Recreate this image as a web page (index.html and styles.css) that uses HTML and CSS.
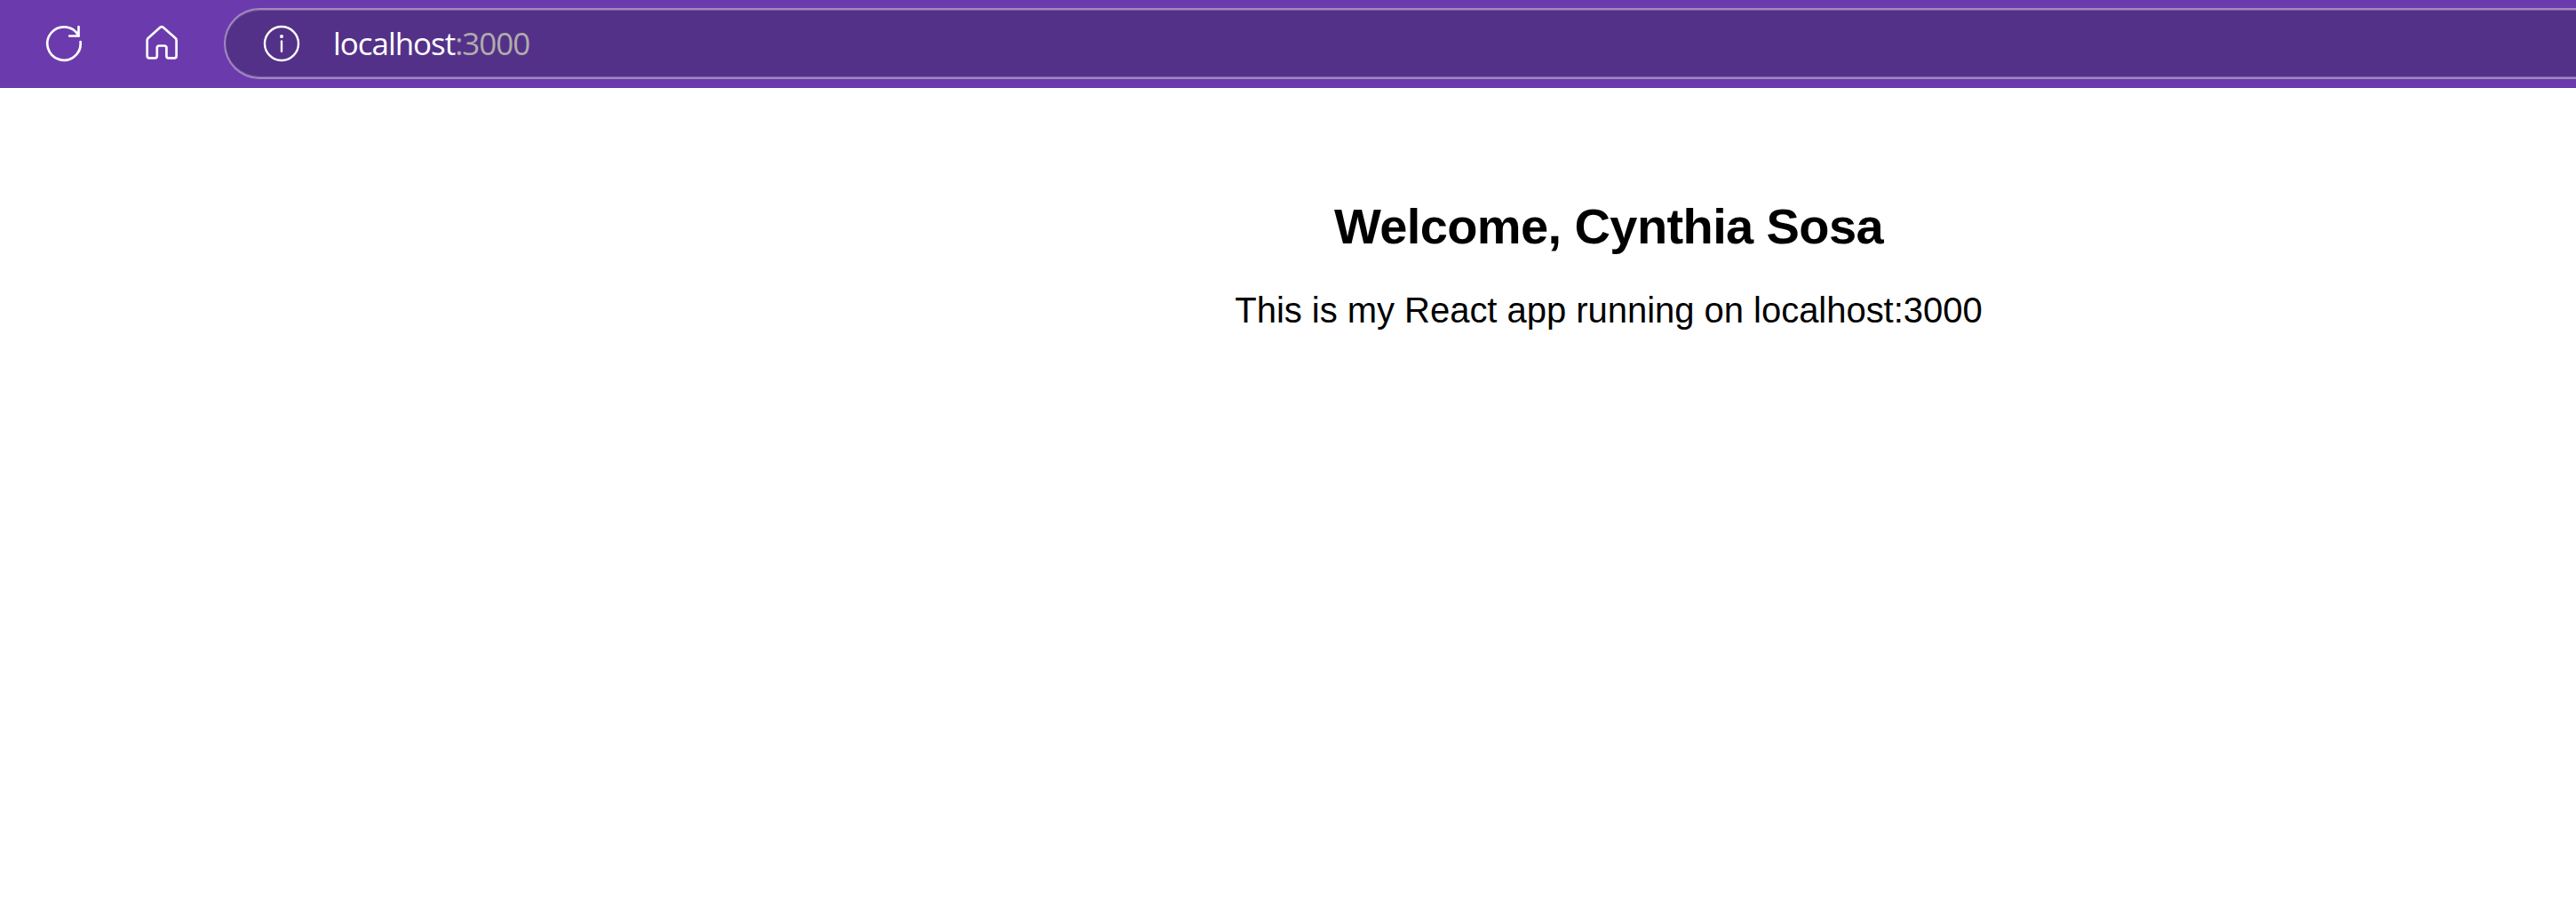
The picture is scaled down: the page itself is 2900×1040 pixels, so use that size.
FILE: index.html
```html
<!DOCTYPE html>
<html lang="en">
<head>
<meta charset="utf-8">
<title>React App</title>
<link rel="stylesheet" href="styles.css">
</head>
<body>
<header class="toolbar">
<svg class="icon reload" viewBox="0 0 44 44"><path d="M40.6 20.05A18.7 18.7 0 1 1 38.66 13.51M38.5 3.2V13.5H28.2"/></svg>
<svg class="icon home" viewBox="0 0 44 44"><path d="M20.6 3.6Q22 2.5 23.4 3.6L37.6 16Q38.6 17 38.6 18.4V36Q38.6 38.3 36.3 38.3H29.7Q27.4 38.3 27.4 36V26.8Q27.4 24.5 25.1 24.5H19.1Q16.8 24.5 16.8 26.8V36Q16.8 38.3 14.5 38.3H8Q5.7 38.3 5.7 36V18.4Q5.7 17 6.7 16Z"/></svg>
<div class="address">
<svg class="icon info" viewBox="0 0 44 44"><circle cx="22" cy="22" r="19"/><path d="M22 19.5V30.7"/><circle class="dot" cx="22" cy="14" r="2"/></svg>
<span class="url">localhost<span class="port">:3000</span></span>
</div>
</header>
<main class="page">
<h1>Welcome, Cynthia Sosa</h1>
<p>This is my React app running on localhost:3000</p>
</main>
</body>
</html>
```
FILE: styles.css
```css
body { margin: 0; overflow: hidden; background: #fff; color: #000; font-family: "Liberation Sans", Arial, sans-serif; }
.toolbar { display: flex; align-items: center; box-sizing: border-box; width: 2900px; height: 99px; padding: 0 0 1px 50px; background: #6b3bae; box-shadow: inset 0 -1px #6336a2; }
.icon { flex: none; width: 44px; height: 44px; fill: none; stroke: #fff; stroke-width: 2.7; stroke-linecap: round; stroke-linejoin: round; }
.home { margin-left: 66px; }
.address { display: flex; align-items: center; flex: 1; box-sizing: border-box; height: 80px; margin-left: 48px; padding-left: 41px; border: 2px solid #a188c1; border-right: 0; border-radius: 40px 0 0 40px; background: #543189; box-shadow: inset 0 1px #79609f, inset 0 -1px #79609f; }
.info { stroke-width: 2.4; }
.info .dot { fill: #fff; stroke: none; }
.url { margin-left: 36px; color: #fff; font: 35px/48px "Open Sans", sans-serif; letter-spacing: -1.05px; }
.port { color: #b0adab; }
.page { width: 2900px; padding: 124px 0 0 722px; box-sizing: border-box; text-align: center; }
h1 { margin: 0; font-size: 56px; line-height: 64px; letter-spacing: -0.6px; }
p { margin: 39px 0 0; font-size: 40px; line-height: 46px; letter-spacing: -0.03px; }
```
